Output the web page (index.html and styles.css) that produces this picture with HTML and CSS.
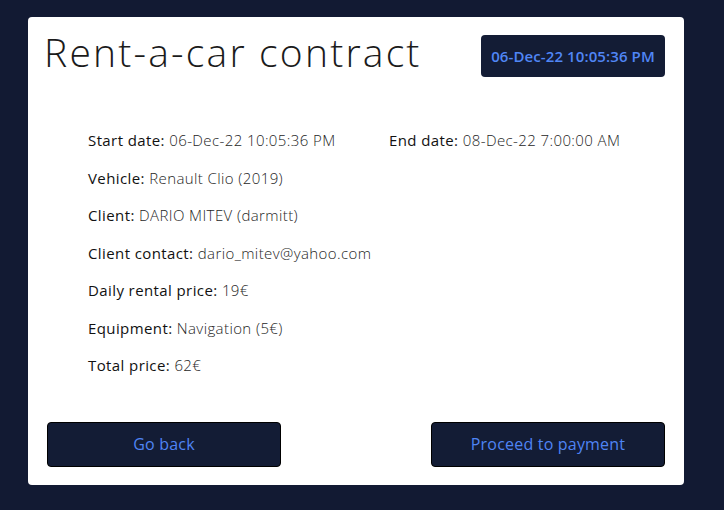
FILE: index.html
```html
<!DOCTYPE html>
<html>
<head>
<meta charset="utf-8">
<link rel="stylesheet" href="styles.css">
</head>
<body>
<div class="card">
  <div class="header">
    <h1 class="title">Rent-a-car contract</h1>
    <div class="badge">06-Dec-22 10:05:36 PM</div>
  </div>
  <div class="details">
    <div class="row two">
      <div class="cell"><span class="label">Start date</span>: <span class="value">06-Dec-22 10:05:36 PM</span></div>
      <div class="cell"><span class="label">End date</span>: <span class="value">08-Dec-22 7:00:00 AM</span></div>
    </div>
    <div class="row"><span class="label">Vehicle</span>: <span class="value">Renault Clio (2019)</span></div>
    <div class="row"><span class="label">Client</span>: <span class="value">DARIO MITEV (darmitt)</span></div>
    <div class="row"><span class="label">Client contact</span>: <span class="value">dario_mitev@yahoo.com</span></div>
    <div class="row"><span class="label">Daily rental price</span>: <span class="value">19€</span></div>
    <div class="row"><span class="label">Equipment</span>: <span class="value">Navigation (5€)</span></div>
    <div class="row"><span class="label">Total price</span>: <span class="value">62€</span></div>
  </div>
  <div class="actions">
    <button class="btn">Go back</button>
    <button class="btn">Proceed to payment</button>
  </div>
</div>
</body>
</html>
```
FILE: styles.css
```css
html, body {
  margin: 0;
  padding: 0;
}
body {
  background: #121a33;
  font-family: "Open Sans", "DejaVu Sans", sans-serif;
  width: 724px;
  height: 510px;
  overflow: hidden;
  padding: 17px 0 0 28px;
  box-sizing: border-box;
}
.card {
  width: 656px;
  height: 468px;
  background: #fff;
  border-radius: 4px;
  box-sizing: border-box;
  padding: 18px 19px 0 16px;
  display: flex;
  flex-direction: column;
}
.header {
  display: flex;
  justify-content: space-between;
  align-items: flex-start;
}
.title {
  margin: -3px 0 0 0;
  font-weight: 300;
  font-size: 39px;
  line-height: 40px;
  color: #1b1b1b;
  letter-spacing: 2.2px;
}
.badge {
  background: #131c35;
  color: #5086f5;
  font-size: 15px;
  font-weight: 600;
  height: 42px;
  width: 184px;
  border-radius: 4px;
  display: flex;
  align-items: center;
  justify-content: center;
  letter-spacing: 0.1px;
}
.details {
  margin: 53px 0 0 44px;
  display: flex;
  flex-direction: column;
}
.row {
  height: 37.5px;
  font-size: 15px;
  line-height: 20px;
  color: #222;
  letter-spacing: 0.4px;
}
.row.two {
  display: grid;
  grid-template-columns: 301px auto;
}
.label {
  font-weight: 500;
  color: #111;
}
.value {
  font-weight: 300;
  color: #262626;
}
.actions {
  margin-top: 29px;
  padding-left: 3px;
  display: flex;
  justify-content: space-between;
}
.btn {
  width: 234px;
  height: 45px;
  background: #131c35;
  border: 1px solid #000;
  border-radius: 4px;
  color: #4f84f4;
  font-family: inherit;
  font-size: 16px;
  font-weight: 500;
  letter-spacing: 0.2px;
  cursor: pointer;
}
```
